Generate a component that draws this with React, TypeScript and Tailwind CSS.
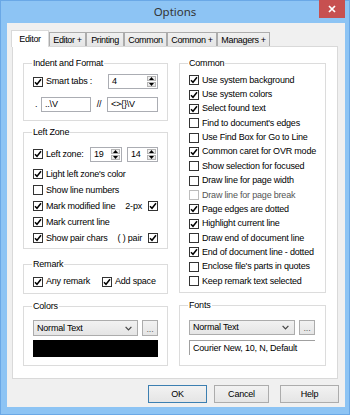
import React from "react";

function Check({ on = false, dim = false }: { on?: boolean; dim?: boolean }) {
  return (
    <span
      className={
        "flex h-[10px] w-[10px] shrink-0 items-center justify-center border bg-white " +
        (dim ? "border-[#bcbcbc]" : "border-[#333333]")
      }
    >
      {on && (
        <svg width="8" height="8" viewBox="0 0 8 8">
          <path d="M1 4.2 L3 6.3 L7 1.3" fill="none" stroke="#000" strokeWidth="1.5" />
        </svg>
      )}
    </span>
  );
}

function CheckRow({
  label,
  on = false,
  dim = false,
  cls = "",
  labelCls = "",
  children,
}: {
  label: string;
  on?: boolean;
  dim?: boolean;
  cls?: string;
  labelCls?: string;
  children?: React.ReactNode;
}) {
  return (
    <div className={"flex items-center " + cls}>
      <Check on={on} dim={dim} />
      <span className={"ml-[3px] whitespace-nowrap " + (dim ? "text-[#555555] " : "") + labelCls}>{label}</span>
      {children}
    </div>
  );
}

function Group({ title, cls, children }: { title: string; cls: string; children?: React.ReactNode }) {
  return (
    <div className={"relative border border-[#dcdcdc] " + cls}>
      <span className="absolute left-[8px] top-[-6px] whitespace-nowrap bg-white px-[1px] leading-[11px]">{title}</span>
      {children}
    </div>
  );
}

function Spin({ value, cls }: { value: string; cls: string }) {
  return (
    <div className={"flex h-[15px] border border-[#abadb3] bg-white " + cls}>
      <span className="flex-1 pl-[3px] leading-[13px]">{value}</span>
      <div className="flex w-[10px] flex-col gap-[1px] py-[1px] pr-[1px]">
        <div className="flex flex-1 items-center justify-center border border-[#b5b5b5] bg-linear-to-b from-[#f4f4f4] to-[#e2e2e2]">
          <svg width="5" height="3" viewBox="0 0 5 3">
            <path d="M0 3 L2.5 0 L5 3 Z" fill="#000" />
          </svg>
        </div>
        <div className="flex flex-1 items-center justify-center border border-[#b5b5b5] bg-linear-to-b from-[#f4f4f4] to-[#e2e2e2]">
          <svg width="5" height="3" viewBox="0 0 5 3">
            <path d="M0 0 L2.5 3 L5 0 Z" fill="#000" />
          </svg>
        </div>
      </div>
    </div>
  );
}

function TextBox({ value, cls }: { value: string; cls: string }) {
  return (
    <div className={"flex h-[15px] items-center border border-[#abadb3] bg-white pl-[3px] " + cls}>
      <span className="whitespace-nowrap">{value}</span>
    </div>
  );
}

function Select({ label, cls }: { label: string; cls: string }) {
  return (
    <div
      className={
        "flex items-center justify-between border border-[#acacac] bg-linear-to-b from-[#f2f2f2] to-[#e5e5e5] pl-[3px] pr-[5px] " +
        cls
      }
    >
      <span className="whitespace-nowrap">{label}</span>
      <svg width="7" height="5" viewBox="0 0 7 5">
        <path d="M0.6 0.8 L3.5 3.8 L6.4 0.8" fill="none" stroke="#444" strokeWidth="1.2" />
      </svg>
    </div>
  );
}

function Dots({ cls }: { cls: string }) {
  return (
    <div
      className={
        "flex items-end justify-center border border-[#acacac] bg-linear-to-b from-[#f2f2f2] to-[#e5e5e5] pb-[2px] leading-[8px] text-[#666] " +
        cls
      }
    >
      ...
    </div>
  );
}

function Btn({ label, cls }: { label: string; cls: string }) {
  return (
    <div
      className={
        "flex h-[18px] items-center justify-center border bg-linear-to-b from-[#f2f2f2] to-[#e5e5e5] " + cls
      }
    >
      {label}
    </div>
  );
}

const common: [string, boolean, boolean?][] = [
  ["Use system background", true],
  ["Use system colors", true],
  ["Select found text", true],
  ["Find to document's edges", false],
  ["Use Find Box for Go to Line", false],
  ["Common caret for OVR mode", true],
  ["Show selection for focused", false],
  ["Draw line for page width", false],
  ["Draw line for page break", false, true],
  ["Page edges are dotted", true],
  ["Highlight current line", true],
  ["Draw end of document line", false],
  ["End of document line - dotted", true],
  ["Enclose file's parts in quotes", false],
  ["Keep remark text selected", false],
];

export default function App() {
  return (
    <div className="h-[415px] w-[350px] border border-[#6aa8e6] bg-[#8dc4f4] font-['Liberation_Sans',Arial,sans-serif] text-[9px] leading-[11px] tracking-[-0.2px] text-black">
      {/* Title bar */}
      <div className="grid h-[22px] grid-cols-[1fr_auto_1fr] items-center">
        <div />
        <div className="font-['Noto_Sans',sans-serif] text-[11.5px] leading-[14px] tracking-normal text-[#333]">
          Options
        </div>
        <div className="flex justify-end self-start pr-[4px]">
          <div className="-mt-[1px] flex h-[18px] w-[26px] items-center justify-center bg-[#c75050]">
            <svg width="8" height="8" viewBox="0 0 8 8">
              <path d="M1 1 L7 7 M7 1 L1 7" stroke="#fff" strokeWidth="1.7" />
            </svg>
          </div>
        </div>
      </div>

      {/* Client */}
      <div className="ml-[6px] flex h-[384px] w-[338px] flex-col bg-[#f0f0f0] pl-[4px] pt-[7px]">
        {/* Tabs */}
        <div className="relative z-10 flex h-[16px] items-end tracking-[-0.35px]">
          <div className="-mb-[1px] flex h-[17px] w-[38px] items-center justify-center border border-b-0 border-[#d9d9d9] bg-white">
            Editor
          </div>
          {[
            ["Editor +", "w-[37px]"],
            ["Printing", "w-[38px]"],
            ["Common", "w-[43px]"],
            ["Common +", "w-[50px]"],
            ["Managers +", "w-[53px]"],
          ].map(([t, w]) => (
            <div
              key={t}
              className={
                "flex h-[14px] items-center justify-center whitespace-nowrap border border-b-0 border-[#acacac] bg-linear-to-b from-[#f0f0f0] to-[#e5e5e5] pt-[1px] " +
                w
              }
            >
              {t}
            </div>
          ))}
        </div>

        {/* Panel */}
        <div className="ml-[1px] flex h-[333px] w-[326px] gap-[11px] border border-[#d9d9d9] bg-white pl-[10px] pt-[16px]">
          {/* Left column */}
          <div className="flex w-[145px] flex-col">
            <Group title="Indent and Format" cls="h-[58px] pl-[9px] pr-[9px] pt-[10px]">
              <div className="flex h-[15px] items-center">
                <CheckRow label="Smart tabs :" on />
                <Spin value="4" cls="ml-auto w-[50px]" />
              </div>
              <div className="mt-[8px] flex h-[15px] items-center">
                <span className="w-[8px] pl-[2px]">.</span>
                <TextBox value="..\V" cls="w-[50px]" />
                <span className="w-[16px] text-center">//</span>
                <TextBox value="<>{}\V" cls="w-[51px]" />
              </div>
            </Group>

            <Group title="Left Zone" cls="mt-[11px] h-[117px] pl-[9px] pr-[9px] pt-[14px]">
              <div className="flex h-[14px] items-center">
                <CheckRow label="Left zone:" on />
                <Spin value="19" cls="ml-auto w-[32px] h-[14px]" />
                <Spin value="14" cls="ml-[5px] w-[31px] h-[14px]" />
              </div>
              <CheckRow label="Light left zone's color" on cls="mt-[5px] h-[16px]" />
              <CheckRow label="Show line numbers" cls="h-[16px]" />
              <CheckRow label="Mark modified line" on cls="h-[16px]">
                <span className="ml-auto">2-px</span>
                <span className="ml-[6px]">
                  <Check on />
                </span>
              </CheckRow>
              <CheckRow label="Mark current line" on cls="h-[16px]" />
              <CheckRow label="Show pair chars" on cls="h-[16px]">
                <span className="ml-auto">( ) pair</span>
                <span className="ml-[6px]">
                  <Check on />
                </span>
              </CheckRow>
            </Group>

            <Group title="Remark" cls="mt-[15px] h-[30px] pl-[9px] pt-[10px]">
              <div className="flex h-[13px] items-center">
                <CheckRow label="Any remark" on cls="w-[69px]" />
                <CheckRow label="Add space" on />
              </div>
            </Group>

            <Group title="Colors" cls="mt-[12px] h-[60px] pl-[9px] pr-[9px] pt-[13px]">
              <div className="flex items-center">
                <Select label="Normal Text" cls="h-[16px] w-[105px]" />
                <Dots cls="ml-[4px] h-[16px] w-[16px]" />
              </div>
              <div className="mt-[4px] h-[17px] bg-black" />
            </Group>
          </div>

          {/* Right column */}
          <div className="flex w-[147px] flex-col">
            <Group title="Common" cls="h-[230px] pl-[9px] pt-[9px]">
              {common.map(([t, on, dim]) => (
                <CheckRow key={t} label={t} on={on} dim={!!dim} cls="h-[14.36px]" />
              ))}
            </Group>
            <Group title="Fonts" cls="mt-[12px] h-[61px] pl-[9px] pr-[10px] pt-[14px]">
              <div className="flex items-center">
                <Select label="Normal Text" cls="h-[15px] w-[106px]" />
                <Dots cls="ml-[4px] h-[15px] w-[16px]" />
              </div>
              <div className="mt-[5px] flex h-[15px] items-center border-l border-t border-[#a0a0a0] pl-[3px]">
                <span className="whitespace-nowrap">Courier New, 10, N, Default</span>
              </div>
            </Group>
          </div>
        </div>

        {/* Buttons */}
        <div className="ml-[137px] mt-[6px] flex">
          <Btn label="OK" cls="w-[59px] border-[#3c7fb1]" />
          <Btn label="Cancel" cls="ml-[7px] w-[55px] border-[#acacac]" />
          <Btn label="Help" cls="ml-[11px] w-[59px] border-[#acacac]" />
        </div>
      </div>
    </div>
  );
}
